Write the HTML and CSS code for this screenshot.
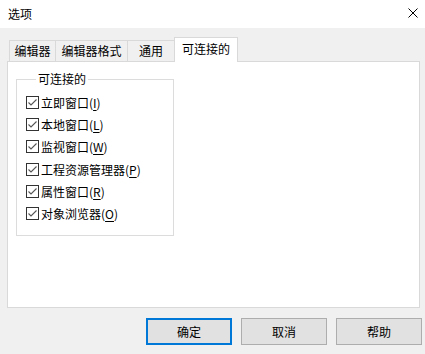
FILE: index.html
```html
<!DOCTYPE html>
<html lang="zh-CN">

<head>
    <meta charset="UTF-8">
    <meta name="viewport" content="width=device-width, initial-scale=1.0">
    <title>选项</title>
    <link rel="stylesheet" href="styles.css">
</head>

<body>

    <!-- Title bar -->
    <div class="titlebar">
        <span class="title">选项</span>
        <svg class="close" width="10" height="10" viewBox="0 0 10 10">
            <path d="M0.5 0.5 L9.5 9.5 M9.5 0.5 L0.5 9.5" stroke="#000" stroke-width="1" fill="none"/>
        </svg>
    </div>

    <div class="content">
        <!-- Tabs -->
        <div class="tabs">
            <div class="tab tab-1">编辑器</div>
            <div class="tab tab-2">编辑器格式</div>
            <div class="tab tab-3">通用</div>
            <div class="tab tab-active">可连接的</div>
        </div>

        <!-- Tab page -->
        <div class="panel">
            <fieldset class="group">
                <legend>可连接的</legend>
                <div class="option"><span class="box"></span>立即窗口(<u>I</u>)</div>
                <div class="option"><span class="box"></span>本地窗口(<u>L</u>)</div>
                <div class="option"><span class="box"></span>监视窗口(<u>W</u>)</div>
                <div class="option"><span class="box"></span>工程资源管理器(<u>P</u>)</div>
                <div class="option"><span class="box"></span>属性窗口(<u>R</u>)</div>
                <div class="option"><span class="box"></span>对象浏览器(<u>O</u>)</div>
            </fieldset>
        </div>

        <!-- Buttons -->
        <div class="buttons">
            <div class="btn btn-default">确定</div>
            <div class="btn">取消</div>
            <div class="btn">帮助</div>
        </div>
    </div>

</body>

</html>
```

FILE: styles.css
```css
body {
    margin: 0;
    width: 425px;
    height: 354px;
    background-color: #f0f0f0;
    font-family: "Noto Sans CJK SC", "Noto Sans", sans-serif;
    font-size: 12px;
    color: #000;
    overflow: hidden;
}

/* Title bar */
.titlebar {
    height: 28px;
    background-color: #fff;
    display: flex;
    align-items: center;
    justify-content: space-between;
    padding: 0 7px 0 8px;
}

.title {
    font-size: 12px;
    line-height: 16px;
    margin-top: -1px;
}

.close {
    margin-top: -2px;
}

.content {
    padding-top: 9px;
}

/* Tabs */
.tabs {
    display: flex;
    align-items: flex-end;
    padding-left: 9px;
    height: 24px;
}

.tab {
    height: 21px;
    box-sizing: border-box;
    border: 1px solid #d9d9d9;
    border-bottom: none;
    background-color: #f0f0f0;
    line-height: 20px;
    text-align: center;
}

.tab + .tab {
    border-left: none;
}

.tab-1 { width: 47px; }
.tab-2 { width: 72px; }
.tab-3 { width: 47px; }

.tab-active {
    position: relative;
    z-index: 1;
    width: 64px;
    height: 25px;
    margin-bottom: -1px;
    margin-left: -1px;
    border-left: 1px solid #d9d9d9 !important;
    background-color: #fff;
    line-height: 21px;
}

/* Tab page */
.panel {
    margin-left: 7px;
    width: 413px;
    height: 247px;
    box-sizing: border-box;
    background-color: #fff;
    border: 1px solid #d9d9d9;
    padding: 9px 0 0 8px;
}

.group {
    margin: 0;
    width: 158px;
    height: 165px;
    box-sizing: border-box;
    border: 1px solid #dcdcdc;
    padding: 4px 0 0 9px;
}

.group legend {
    padding: 0 2px;
    margin-left: 10px;
    line-height: 16px;
}

.option {
    display: flex;
    align-items: center;
    height: 22.3px;
    white-space: nowrap;
}

.option u {
    text-underline-offset: 2px;
}

.box {
    width: 13px;
    height: 13px;
    box-sizing: border-box;
    border: 1px solid #333;
    margin-right: 2px;
    background: #fff url("data:image/svg+xml,%3Csvg xmlns='http://www.w3.org/2000/svg' width='11' height='11'%3E%3Cpath d='M1.5 5.5 L4 8 L9.5 2.5' stroke='%23555' stroke-width='1.1' fill='none'/%3E%3C/svg%3E") no-repeat center;
}

/* Buttons */
.buttons {
    display: flex;
    justify-content: flex-end;
    gap: 9px;
    padding: 10px 3px 0 0;
}

.btn {
    width: 86px;
    height: 27px;
    box-sizing: border-box;
    border: 1px solid #adadad;
    background-color: #e1e1e1;
    display: flex;
    align-items: center;
    justify-content: center;
}

.btn-default {
    border: 2px solid #0078d7;
}
```
